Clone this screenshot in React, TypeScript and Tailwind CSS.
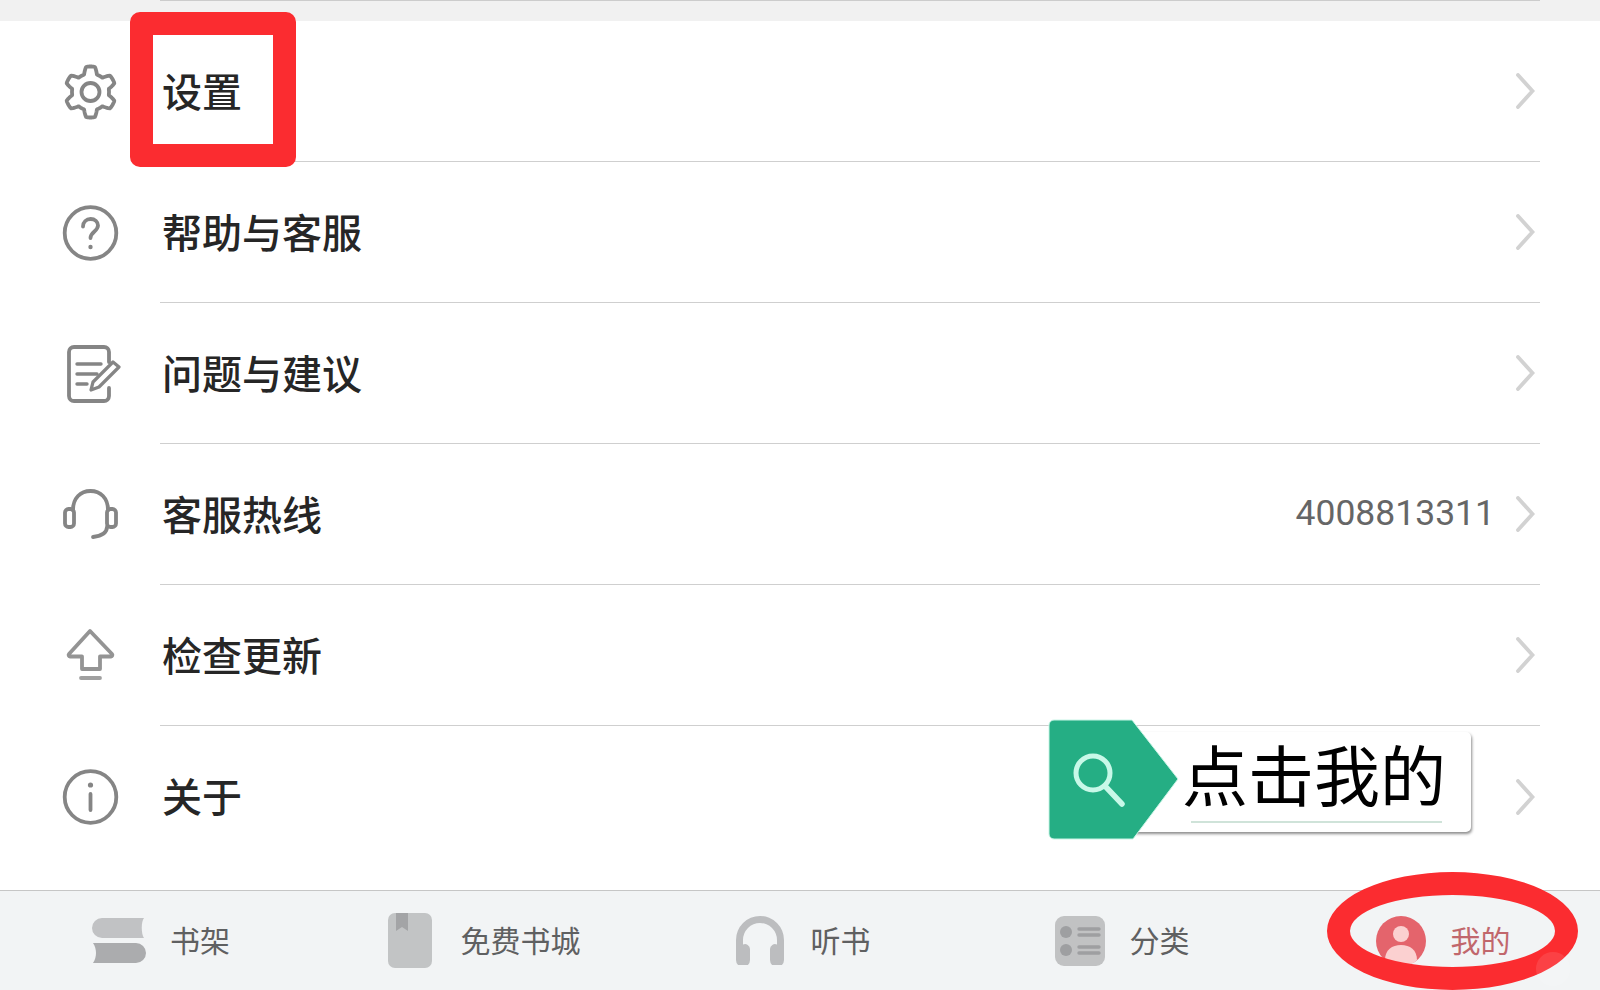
import type { ReactNode } from 'react';

const cjk = "font-['Noto_Sans_CJK_SC','Noto_Sans',sans-serif]";

// six rounded lobes, sampled around the circle
const gearPath = () => {
  const pts: string[] = [];
  for (let i = 0; i < 144; i++) {
    const a = (i / 144) * Math.PI * 2;
    const wave = Math.cos(6 * a);
    const s = Math.max(-1, Math.min(1, wave * 1.9));
    const r = 22 + 3.5 * s;
    const x = 29.5 + r * Math.sin(a);
    const y = 30 - r * Math.cos(a);
    pts.push(`${x.toFixed(2)} ${y.toFixed(2)}`);
  }
  return `M${pts.join('L')}Z`;
};

function Svg60({ children }: { children: ReactNode }) {
  return (
    <svg
      width="60"
      height="60"
      viewBox="0 0 60 60"
      fill="none"
      stroke="#858585"
      strokeWidth="3.8"
      strokeLinecap="round"
      strokeLinejoin="round"
    >
      {children}
    </svg>
  );
}

const GearIcon = () => (
  <Svg60>
    <path d={gearPath()} />
    <circle cx="29.500" cy="30" r="9" />
  </Svg60>
);

const HelpIcon = () => (
  <Svg60>
    <circle cx="29.500" cy="30" r="25.800" />
    <path d="M22 23.500c0-4.600 3.400-7.500 7.600-7.500s7.400 2.800 7.400 6.600c0 5.600-7.500 6.200-7.500 12.400" strokeWidth="3.800" />
    <circle cx="29.500" cy="44" r="2.200" fill="#858585" stroke="none" />
  </Svg60>
);

const NoteIcon = () => (
  <Svg60>
    <path d="M48 18V8a5 5 0 0 0-5-5H13a5 5 0 0 0-5 5v44a5 5 0 0 0 5 5h30a5 5 0 0 0 5-5V44" />
    <path d="M16 20h24M16 30h20M16 40h10" strokeWidth="3.400" />
    <path d="M30 46l2-8 20-20 6 5-20 20z" strokeWidth="3.200" />
  </Svg60>
);

const HeadsetIcon = () => (
  <Svg60>
    <rect x="4" y="24" width="9" height="18" rx="3.500" />
    <rect x="46" y="24" width="9" height="18" rx="3.500" />
    <path d="M12 25c0-12 7.500-19 17.500-19S47 13 47 25" />
    <path d="M46 42c0 6-6 9-14 10" />
  </Svg60>
);

const UpdateIcon = () => (
  <Svg60>
    <path d="M29 5L51 28a1.500 1.500 0 0 1-1 2.500H39V43H21V30.500H9a1.500 1.500 0 0 1-1-2.500z" stroke="#949494" />
    <path d="M20 52h19" stroke="#a0a0a0" />
  </Svg60>
);

const InfoIcon = () => (
  <Svg60>
    <circle cx="29.500" cy="30" r="25.800" />
    <circle cx="29.500" cy="18" r="2.600" fill="#858585" stroke="none" />
    <path d="M29.500 27v16" strokeWidth="3.800" />
  </Svg60>
);

const Chevron = () => (
  <svg width="20" height="36" viewBox="0 0 20 36" fill="none" stroke="#d2d2d2" strokeWidth="3.800" strokeLinecap="round">
    <path d="M3 2l14.500 16L3 34" />
  </svg>
);

const rows = [
  { icon: GearIcon, label: '设置' },
  { icon: HelpIcon, label: '帮助与客服' },
  { icon: NoteIcon, label: '问题与建议' },
  { icon: HeadsetIcon, label: '客服热线', value: '4008813311' },
  { icon: UpdateIcon, label: '检查更新' },
  { icon: InfoIcon, label: '关于' },
];

const ShelfIcon = () => (
  <svg width="54" height="46" viewBox="0 0 54 46">
    <path d="M10 0h42c-3 3.500-3 16 0 20H10a10 10 0 0 1 0-20z" fill="#c1c2c4" />
    <path d="M1 25h43a10 10 0 0 1 0 20H1c4-6 4-14 0-20z" fill="#abacae" />
  </svg>
);

const BookIcon = () => (
  <svg width="44" height="55" viewBox="0 0 44 55">
    <rect width="44" height="55" rx="7" fill="#c2c4c5" />
    <path d="M8 0h12v18l-6-4-6 4z" fill="#a3a4a6" />
  </svg>
);

const PhonesIcon = () => (
  <svg width="48" height="49" viewBox="0 0 48 49">
    <path d="M0 24a24 24 0 0 1 48 0v20a5 5 0 0 1-14 0V33a5 5 0 0 1 7-4.500V24a17 17 0 0 0-34 0v4.500A5 5 0 0 1 14 33v11a5 5 0 0 1-14 0z" fill="#bcbdbf" />
  </svg>
);

const ListIcon = () => (
  <svg width="50" height="50" viewBox="0 0 50 50">
    <rect width="50" height="50" rx="9" fill="#c1c2c3" />
    <circle cx="11" cy="16" r="6" fill="#9e9fa1" />
    <circle cx="11" cy="34" r="6" fill="#9e9fa1" />
    <path d="M24 13h20M24 19h20M24 31h20M24 37h20" stroke="#9e9fa1" strokeWidth="3.400" strokeLinecap="round" />
  </svg>
);

const AvatarIcon = () => (
  <svg width="50" height="50" viewBox="0 0 50 50">
    <circle cx="25" cy="25" r="25" fill="#e4646c" />
    <circle cx="25" cy="18" r="8" fill="#fbd0d0" />
    <path d="M9 44c0-10 7-15 16-15s16 5 16 15c-4 4-10 6-16 6s-12-2-16-6z" fill="#fbd0d0" />
  </svg>
);

const tabs = [
  { icon: ShelfIcon, label: '书架', box: 'gap-[24px] pl-[2px]', text: 'text-[#5f6061]' },
  { icon: BookIcon, label: '免费书城', box: 'gap-[29px] pl-[8px]', text: 'text-[#5f6061]' },
  { icon: PhonesIcon, label: '听书', box: 'gap-[27px] pl-[6px]', text: 'text-[#5f6061]' },
  { icon: ListIcon, label: '分类', box: 'gap-[25px] pl-[4px]', text: 'text-[#5f6061]' },
  { icon: AvatarIcon, label: '我的', box: 'gap-[25px] pl-[6px]', text: 'text-[#c1676c]' },
];

export default function App() {
  return (
    <div className={`relative flex h-[990px] w-[1600px] flex-col overflow-hidden bg-white ${cjk}`}>
      <div className="h-[21px] shrink-0 bg-[#f1f1f1] pl-[160px] pr-[60px]">
        <div className="h-px bg-[#cccccc]" />
      </div>

      {rows.map(({ icon: Icon, label, value }, i) => (
        <div key={label} className="flex h-[141px] shrink-0 items-center">
          <div className="w-[160px] shrink-0 pl-[61px]">
            <Icon />
          </div>
          <div
            className={`mr-[60px] flex h-full flex-1 items-center justify-between pl-[2px] pr-[5px] ${
              i < rows.length - 1 ? 'border-b border-[#cfcfcf]' : ''
            }`}
          >
            <span className="mb-[3px] text-[40px] font-medium leading-none text-[#262626]">{label}</span>
            <div className="flex items-center gap-[20px]">
              {value && <span className="font-['Roboto',sans-serif] text-[35.5px] leading-none text-[#666666]">{value}</span>}
              <Chevron />
            </div>
          </div>
        </div>
      ))}

      <div className="mt-auto grid h-[100px] shrink-0 grid-cols-5 border-t border-[#c6c6c6] bg-[#f2f4f5]">
        {tabs.map(({ icon: Icon, label, box, text }) => (
          <div key={label} className={`flex items-center justify-center ${box}`}>
            <Icon />
            <span className={`mb-[4px] text-[30px] leading-none ${text}`}>{label}</span>
          </div>
        ))}
      </div>

      {/* annotations on top of the screenshot */}
      <div className="absolute left-[130px] top-[12px] h-[155px] w-[166px] rounded-[10px] border-[23px] border-[#fb2c30]" />
      <div className="absolute left-[1327px] top-[872px] h-[118px] w-[251px] rounded-[50%] border-[23px] border-[#fb2c30]" />
      <div className="absolute left-[1536px] top-[952px] h-[34px] w-[34px] rounded-full bg-white/10" />

      <div className="absolute left-[1048px] top-[719px] h-[122px] w-[423px]">
        <div className="absolute bottom-[9px] left-[80px] right-0 top-[13px] rounded-[5px] bg-white shadow-[1px_2px_3px_rgba(0,0,0,0.45)]">
          <span className="absolute left-[54px] top-[-2px] whitespace-nowrap text-[66px] leading-[84px] text-black">点击我的</span>
          <div className="absolute bottom-[9px] left-[63px] right-[29px] h-[2px] bg-[#cfe3d9]" />
        </div>
        <svg className="absolute left-0 top-0" width="132" height="122" viewBox="0 0 132 122">
          <path d="M6 1h78l46 59-45 60H6a5 5 0 0 1-5-5V6a5 5 0 0 1 5-5z" fill="#25ae84" stroke="#c9f5e6" strokeWidth="1" />
          <circle cx="45" cy="54" r="17" fill="none" stroke="#c8f8e8" strokeWidth="5" />
          <path d="M57 67l17 18" stroke="#c8f8e8" strokeWidth="5.500" strokeLinecap="round" />
        </svg>
      </div>
    </div>
  );
}
